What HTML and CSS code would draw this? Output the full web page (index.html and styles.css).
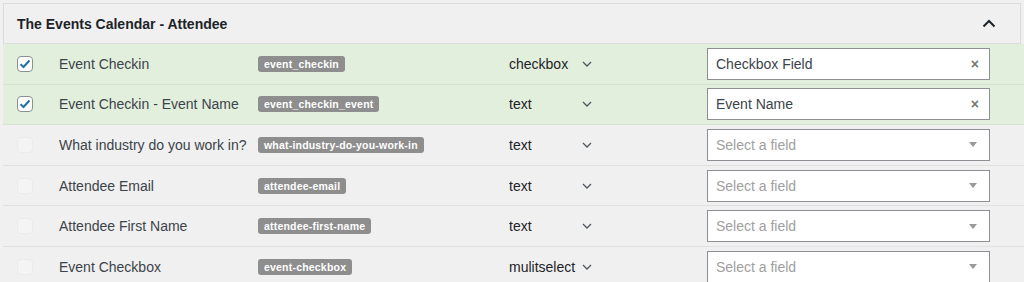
FILE: index.html
```html
<!DOCTYPE html>
<html>
<head>
<meta charset="utf-8">
<link rel="stylesheet" href="styles.css">
</head>
<body>
<div class="panel">
  <div class="header">
    <h2 class="title">The Events Calendar - Attendee</h2>
    <svg class="toggle" width="14" height="9" viewBox="0 0 14 9"><path d="M1.5 7.5 L7 2 L12.5 7.5" fill="none" stroke="#1d2327" stroke-width="2"/></svg>
  </div>
  <div class="rows">
    <div class="row mapped">
      <span class="cb checked"><svg width="12" height="10" viewBox="0 0 12 10"><path d="M1.5 5.2 L4.5 8 L10.5 1.5" fill="none" stroke="#2271b1" stroke-width="2"/></svg></span>
      <span class="name">Event Checkin</span>
      <span class="slug-cell"><span class="slug">event_checkin</span></span>
      <span class="type"><span class="type-text">checkbox</span><svg class="chev" width="10" height="6" viewBox="0 0 10 6"><path d="M1 1 L5 5 L9 1" fill="none" stroke="#50575e" stroke-width="1.3"/></svg></span>
      <span class="select"><span class="value">Checkbox Field</span><span class="clear">×</span></span>
    </div>
    <div class="row mapped">
      <span class="cb checked"><svg width="12" height="10" viewBox="0 0 12 10"><path d="M1.5 5.2 L4.5 8 L10.5 1.5" fill="none" stroke="#2271b1" stroke-width="2"/></svg></span>
      <span class="name">Event Checkin - Event Name</span>
      <span class="slug-cell"><span class="slug">event_checkin_event</span></span>
      <span class="type"><span class="type-text">text</span><svg class="chev" width="10" height="6" viewBox="0 0 10 6"><path d="M1 1 L5 5 L9 1" fill="none" stroke="#50575e" stroke-width="1.3"/></svg></span>
      <span class="select"><span class="value">Event Name</span><span class="clear">×</span></span>
    </div>
    <div class="row">
      <span class="cb"></span>
      <span class="name">What industry do you work in?</span>
      <span class="slug-cell"><span class="slug">what-industry-do-you-work-in</span></span>
      <span class="type"><span class="type-text">text</span><svg class="chev" width="10" height="6" viewBox="0 0 10 6"><path d="M1 1 L5 5 L9 1" fill="none" stroke="#50575e" stroke-width="1.3"/></svg></span>
      <span class="select"><span class="placeholder">Select a field</span><span class="arrow"></span></span>
    </div>
    <div class="row">
      <span class="cb"></span>
      <span class="name">Attendee Email</span>
      <span class="slug-cell"><span class="slug">attendee-email</span></span>
      <span class="type"><span class="type-text">text</span><svg class="chev" width="10" height="6" viewBox="0 0 10 6"><path d="M1 1 L5 5 L9 1" fill="none" stroke="#50575e" stroke-width="1.3"/></svg></span>
      <span class="select"><span class="placeholder">Select a field</span><span class="arrow"></span></span>
    </div>
    <div class="row">
      <span class="cb"></span>
      <span class="name">Attendee First Name</span>
      <span class="slug-cell"><span class="slug">attendee-first-name</span></span>
      <span class="type"><span class="type-text">text</span><svg class="chev" width="10" height="6" viewBox="0 0 10 6"><path d="M1 1 L5 5 L9 1" fill="none" stroke="#50575e" stroke-width="1.3"/></svg></span>
      <span class="select"><span class="placeholder">Select a field</span><span class="arrow"></span></span>
    </div>
    <div class="row">
      <span class="cb"></span>
      <span class="name">Event Checkbox</span>
      <span class="slug-cell"><span class="slug">event-checkbox</span></span>
      <span class="type"><span class="type-text">mulitselect</span><svg class="chev" width="10" height="6" viewBox="0 0 10 6"><path d="M1 1 L5 5 L9 1" fill="none" stroke="#50575e" stroke-width="1.3"/></svg></span>
      <span class="select"><span class="placeholder">Select a field</span><span class="arrow"></span></span>
    </div>
  </div>
</div>
</body>
</html>
```

FILE: styles.css
```css
html, body {
  margin: 0;
  padding: 0;
  background: #f0f0f1;
  font-family: "Liberation Sans", Arial, sans-serif;
  font-size: 14px;
  color: #3c434a;
  overflow: hidden;
}

.panel {
  padding-top: 3px;
  padding-left: 3px;
}

.header {
  display: flex;
  align-items: center;
  justify-content: space-between;
  height: 39px;
  margin-right: 3px;
  border: 1px solid #dcdcde;
  background: #f0f0f1;
  padding: 0 24px 0 13px;
}

.title {
  margin: 0;
  font-size: 14px;
  font-weight: bold;
  color: #1d2327;
}

.toggle {
  display: block;
}

.row {
  display: grid;
  grid-template-columns: 42px 199px 251px 198px 283px;
  align-items: center;
  height: 39.6px;
  padding-left: 14px;
  border-bottom: 1px solid #e0e0e0;
  background: #f0f0f0;
}

.row.mapped {
  background: #e2efdc;
  border-bottom-color: #d6e4d0;
}

.cb {
  width: 14px;
  height: 14px;
  border: 1px solid #ebebeb;
  border-radius: 4px;
  background: #f4f4f4;
  display: flex;
  align-items: center;
  justify-content: center;
}

.cb.checked {
  background: #fff;
  border-color: #8c8f94;
}

.name {
  color: #3c434a;
  white-space: nowrap;
}

.slug-cell {
  display: flex;
}

.slug {
  display: inline-block;
  background: #8e8e8e;
  color: #fff;
  font-size: 10.5px;
  font-weight: bold;
  line-height: 16px;
  padding: 0 6px;
  border-radius: 3px;
  letter-spacing: 0.2px;
}

.type {
  display: flex;
  align-items: center;
  color: #1d2327;
}

.type-text {
  width: 73px;
}

.chev {
  display: block;
}

.select {
  display: flex;
  align-items: center;
  justify-content: space-between;
  height: 30px;
  border: 1px solid #8c8f94;
  background: #fff;
  padding: 0 10px 0 8px;
}

.value {
  color: #3c434a;
}

.placeholder {
  color: #a0a0a0;
}

.clear {
  color: #777;
  font-size: 14px;
  font-weight: bold;
}

.arrow {
  width: 0;
  height: 0;
  border-left: 4px solid transparent;
  border-right: 4px solid transparent;
  border-top: 5px solid #999;
  margin-right: 2px;
}
```
